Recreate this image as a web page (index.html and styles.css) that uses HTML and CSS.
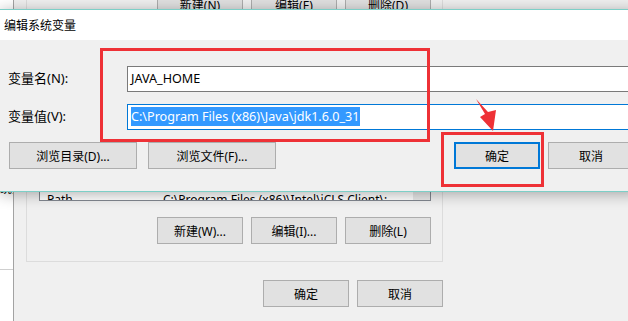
FILE: index.html
```html
<!DOCTYPE html>
<html lang="zh-CN">
<head>
    <meta charset="UTF-8">
    <title>编辑系统变量</title>
    <link rel="stylesheet" href="styles.css">
</head>
<body>
    <div class="envwin">
        <div class="nav">
            <div class="nav-top"><span class="nav-text">统则</span></div>
            <div class="nav-bottom"></div>
        </div>
        <div class="envmain">
            <div class="group group-user">
                <div class="btn-row">
                    <button class="btn">新建(N)</button>
                    <button class="btn">编辑(E)</button>
                    <button class="btn">删除(D)</button>
                </div>
            </div>
            <div class="group group-sys">
                <div class="list">
                    <div class="list-rows">
                        <div class="list-row"><span class="col-name">TEMP</span><span>C:\Windows\TEMP</span></div>
                        <div class="list-row"><span class="col-name">Path</span><span>C:\Program Files (x86)\Intel\iCLS Client\;</span></div>
                    </div>
                    <div class="scroll"></div>
                </div>
                <div class="btn-row">
                    <button class="btn">新建(W)...</button>
                    <button class="btn">编辑(I)...</button>
                    <button class="btn">删除(L)</button>
                </div>
            </div>
            <div class="btn-row footer">
                <button class="btn">确定</button>
                <button class="btn">取消</button>
            </div>
        </div>
    </div>

    <div class="dialog">
        <div class="titlebar">
            <span class="title">编辑系统变量</span>
            <span class="close">✕</span>
        </div>
        <div class="dlg-body">
            <div class="field-row">
                <label class="field-label">变量名(N):</label>
                <div class="field">JAVA_HOME</div>
            </div>
            <div class="field-row">
                <label class="field-label">变量值(V):</label>
                <div class="field field-focus"><span class="sel">C:\Program Files (x86)\Java\jdk1.6.0_31</span></div>
            </div>
            <div class="dlg-buttons">
                <button class="btn btn-wide">浏览目录(D)...</button>
                <button class="btn btn-wide">浏览文件(F)...</button>
                <span class="spacer"></span>
                <button class="btn btn-default">确定</button>
                <button class="btn">取消</button>
            </div>
        </div>
    </div>

    <div class="mark mark-fields"></div>
    <div class="mark mark-ok"></div>
    <svg class="arrow" width="628" height="321" viewBox="0 0 628 321">
        <polygon points="476,99 488,112 496,110 493,131 480,117 485,114" fill="#ee3136"/>
    </svg>
</body>
</html>
```

FILE: styles.css
```css
body {
    margin: 0;
    width: 628px;
    height: 321px;
    overflow: hidden;
    position: relative;
    background-color: #f0f0f0;
    font-family: "Noto Sans", "Noto Sans CJK SC", sans-serif;
    font-size: 12px;
    color: #000;
}
button {
    font-family: inherit;
    font-size: 12px;
    color: #000;
}
.btn {
    width: 86px;
    height: 27px;
    padding: 0;
    background-color: #e1e1e1;
    border: 1px solid #adadad;
}

/* background window */
.envwin {
    display: flex;
    height: 321px;
}
.nav {
    width: 13px;
    border-right: 1px solid #a3a3a3;
    background-color: #fff;
    display: flex;
    flex-direction: column;
}
.nav-top {
    height: 269px;
    border-bottom: 1px solid #cfcfcf;
    overflow: hidden;
}
.nav-text {
    display: block;
    margin-top: 181px;
    white-space: nowrap;
    line-height: 16px;
}
.envmain {
    width: 417px;
    margin-left: 12px;
    margin-top: -28px;
    display: flex;
    flex-direction: column;
}
.group {
    border: 1px solid #dcdcdc;
    padding: 0 11px 0 12px;
}
.group-user {
    padding-top: 18px;
    padding-bottom: 10px;
}
.group-sys {
    margin-top: 12px;
    padding-top: 30px;
    padding-bottom: 17px;
}
.btn-row {
    display: flex;
    justify-content: flex-end;
    gap: 8px;
}
.list {
    height: 127px;
    border: 1px solid #828790;
    background-color: #fff;
    display: flex;
    margin-bottom: 16px;
}
.list-rows {
    flex: 1;
    overflow: hidden;
    display: flex;
    flex-direction: column;
    justify-content: flex-end;
}
.list-row {
    height: 17px;
    line-height: 17px;
    padding-left: 7px;
    white-space: nowrap;
    margin-bottom: -8px;
}
.list-row + .list-row {
    margin-top: 8px;
}
.col-name {
    display: inline-block;
    width: 116px;
}
.scroll {
    width: 17px;
    background-color: #e9e9e9;
}
.footer {
    margin-top: 18px;
}

/* dialog */
.dialog {
    position: absolute;
    top: 9px;
    left: 0;
    width: 640px;
    border-top: 1px solid #7ccfc7;
    border-bottom: 1px solid #7ccfc7;
    background-color: #f0f0f0;
    box-shadow: 0 2px 14px rgba(0, 0, 0, 0.32);
}
.titlebar {
    height: 30px;
    background-color: #fff;
    display: flex;
    align-items: center;
    padding-left: 4px;
}
.title {
    font-size: 12px;
}
.close {
    margin-left: auto;
    margin-right: 3px;
    font-size: 11px;
}
.dlg-body {
    height: 151px;
    box-sizing: border-box;
    padding: 26px 6px 0 8px;
}
.field-row {
    display: flex;
    align-items: center;
    margin-bottom: 12px;
}
.field-label {
    width: 119px;
    font-size: 13px;
    padding-bottom: 3px;
}
.field {
    flex: 1;
    height: 26px;
    box-sizing: border-box;
    border: 1px solid #7a7a7a;
    background-color: #fff;
    padding-left: 3px;
    font-size: 12.6px;
    line-height: 24px;
    white-space: nowrap;
    overflow: hidden;
}
.field-focus {
    border-color: #0078d7;
}
.sel {
    background-color: #3399ff;
    color: #fff;
    padding: 1px 0;
}
.dlg-buttons {
    display: flex;
    gap: 8px;
    margin-top: 5px;
    padding-left: 1px;
}
.btn-wide {
    width: 128px;
}
.btn-wide + .btn-wide {
    margin-left: 3px;
}
.spacer {
    flex: 1;
}
.btn-default {
    border: 2px solid #0078d7;
}

/* red annotations */
.mark {
    position: absolute;
    border: 3px solid #ee3136;
    box-sizing: border-box;
}
.mark-fields {
    left: 100px;
    top: 48px;
    width: 330px;
    height: 94px;
}
.mark-ok {
    left: 441px;
    top: 132px;
    width: 103px;
    height: 55px;
}
.arrow {
    position: absolute;
    left: 0;
    top: 0;
}
```
